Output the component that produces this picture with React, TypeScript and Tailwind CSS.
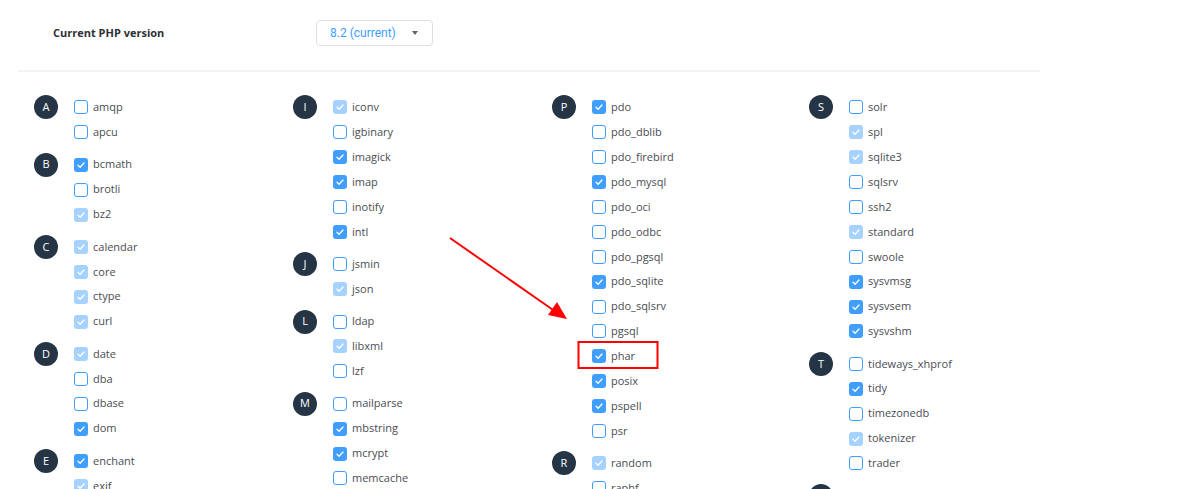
type State = "on" | "off" | "locked";

type Group = { letter: string; items: [string, State][] };

const COLUMNS: Group[][] = [
  [
    { letter: "A", items: [["amqp", "off"], ["apcu", "off"]] },
    { letter: "B", items: [["bcmath", "on"], ["brotli", "off"], ["bz2", "locked"]] },
    { letter: "C", items: [["calendar", "locked"], ["core", "locked"], ["ctype", "locked"], ["curl", "locked"]] },
    { letter: "D", items: [["date", "locked"], ["dba", "off"], ["dbase", "off"], ["dom", "on"]] },
    { letter: "E", items: [["enchant", "on"], ["exif", "locked"]] },
  ],
  [
    {
      letter: "I",
      items: [["iconv", "locked"], ["igbinary", "off"], ["imagick", "on"], ["imap", "on"], ["inotify", "off"], ["intl", "on"]],
    },
    { letter: "J", items: [["jsmin", "off"], ["json", "locked"]] },
    { letter: "L", items: [["ldap", "off"], ["libxml", "locked"], ["lzf", "off"]] },
    { letter: "M", items: [["mailparse", "off"], ["mbstring", "on"], ["mcrypt", "on"], ["memcache", "off"]] },
  ],
  [
    {
      letter: "P",
      items: [
        ["pdo", "on"],
        ["pdo_dblib", "off"],
        ["pdo_firebird", "off"],
        ["pdo_mysql", "on"],
        ["pdo_oci", "off"],
        ["pdo_odbc", "off"],
        ["pdo_pgsql", "off"],
        ["pdo_sqlite", "on"],
        ["pdo_sqlsrv", "off"],
        ["pgsql", "off"],
        ["phar", "on"],
        ["posix", "on"],
        ["pspell", "on"],
        ["psr", "off"],
      ],
    },
    { letter: "R", items: [["random", "locked"], ["raphf", "off"]] },
  ],
  [
    {
      letter: "S",
      items: [
        ["solr", "off"],
        ["spl", "locked"],
        ["sqlite3", "locked"],
        ["sqlsrv", "off"],
        ["ssh2", "off"],
        ["standard", "locked"],
        ["swoole", "off"],
        ["sysvmsg", "on"],
        ["sysvsem", "on"],
        ["sysvshm", "on"],
      ],
    },
    {
      letter: "T",
      items: [["tideways_xhprof", "off"], ["tidy", "on"], ["timezonedb", "off"], ["tokenizer", "locked"], ["trader", "off"]],
    },
    { letter: "U", items: [["uuid", "off"]] },
  ],
];

function Box({ state }: { state: State }) {
  if (state === "off") {
    return <span className="h-[14px] w-[14px] shrink-0 rounded-[3px] border-[1.5px] border-[#409eff] bg-white" />;
  }
  return (
    <span
      className={`flex h-[14px] w-[14px] shrink-0 items-center justify-center rounded-[3px] ${
        state === "on" ? "bg-[#409eff]" : "bg-[#a6d2ff]"
      }`}
    >
      <svg width="10" height="10" viewBox="0 0 10 10" fill="none">
        <path d="M2 5.2 L4.1 7.2 L8 3" stroke="white" strokeWidth="1.3" strokeLinecap="round" strokeLinejoin="round" />
      </svg>
    </span>
  );
}

function LetterGroup({ group }: { group: Group }) {
  return (
    <div className="flex">
      <div className="flex h-[24.9px] items-center">
        <span className="flex h-6 w-6 items-center justify-center rounded-full bg-[#253545] text-[11px] text-white">
          {group.letter}
        </span>
      </div>
      <ul className="ml-4">
        {group.items.map(([name, state]) => (
          <li key={name} className="flex h-[24.9px] items-center gap-[5px] text-[11px] text-[#4a4d52]">
            <Box state={state} />
            <span>{name}</span>
          </li>
        ))}
      </ul>
    </div>
  );
}

export default function App() {
  return (
    <div className="relative h-[489px] overflow-hidden bg-white px-[18px] font-['Open_Sans',sans-serif]">
      {/* version picker */}
      <div className="flex items-center pl-[35px] pt-5">
        <label className="w-[263px] text-[11px] font-bold text-[#2d3035]">Current PHP version</label>
        <button className="flex h-[26px] w-[117px] items-center justify-between rounded-[4px] border border-[#dcdfe6] bg-white pl-[13px] pr-[14px] font-['Roboto',sans-serif] text-[12px] text-[#409eff]">
          <span>8.2 (current)</span>
          <span className="h-0 w-0 border-x-[3.5px] border-t-[4px] border-x-transparent border-t-[#606266]" />
        </button>
      </div>

      <div className="mt-6 h-[2px] w-[1022px] bg-[#f2f3f5]" />

      {/* extensions */}
      <div className="grid grid-cols-[259px_259px_257px_259px] pl-4 pt-[23px]">
        {COLUMNS.map((col, i) => (
          <div key={i} className="flex flex-col gap-[7.5px]">
            {col.map((g) => (
              <LetterGroup key={g.letter} group={g} />
            ))}
          </div>
        ))}
      </div>

      {/* annotation */}
      <svg className="pointer-events-none absolute left-0 top-0" width="1200" height="489">
        <line x1="450" y1="238" x2="556" y2="312" stroke="#ff0000" strokeWidth="2" />
        <polygon points="567,319 548,315 557,302" fill="#ff0000" />
        <rect x="578.5" y="342" width="79" height="26" fill="none" stroke="#ff0000" strokeWidth="2" />
      </svg>
    </div>
  );
}
